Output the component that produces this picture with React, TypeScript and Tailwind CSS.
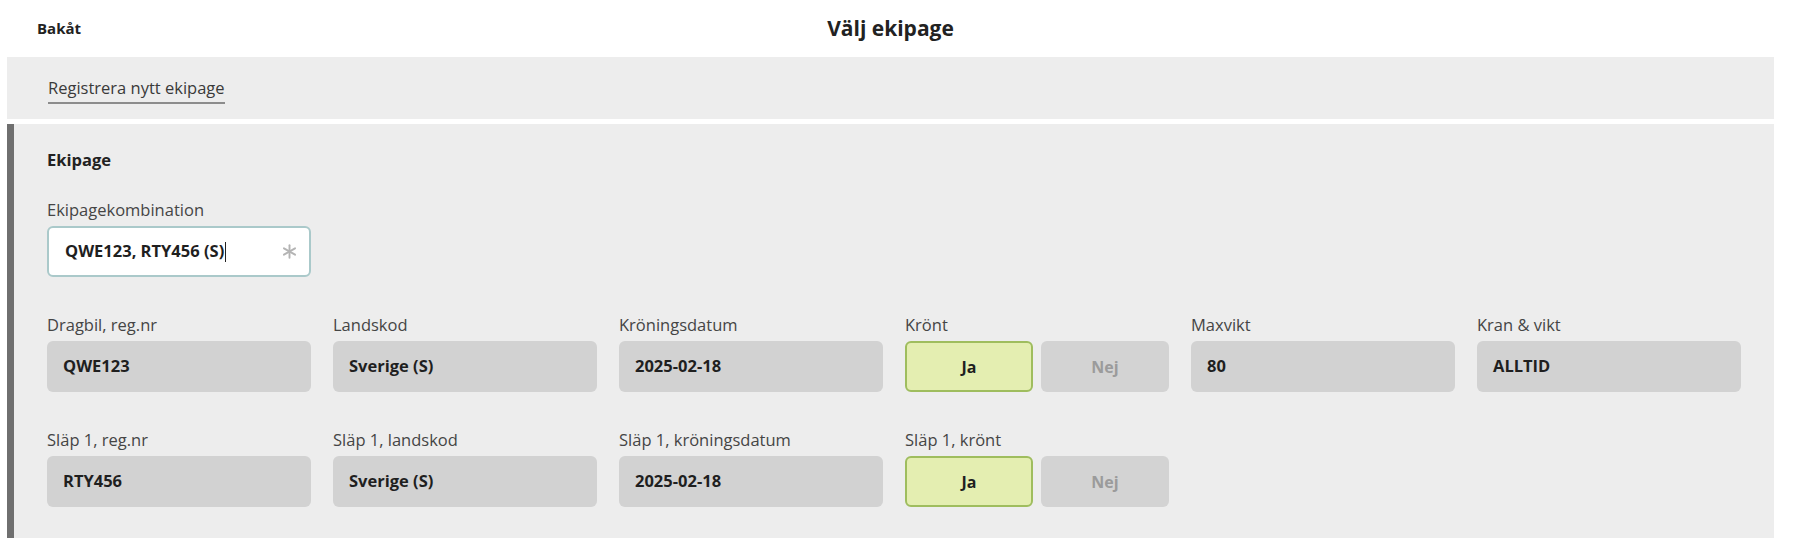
import React from 'react';

interface Field {
  label: string;
  value: string;
}

const row1: Field[] = [
  { label: 'Dragbil, reg.nr', value: 'QWE123' },
  { label: 'Landskod', value: 'Sverige (S)' },
  { label: 'Kröningsdatum', value: '2025-02-18' },
];

const row2: Field[] = [
  { label: 'Släp 1, reg.nr', value: 'RTY456' },
  { label: 'Släp 1, landskod', value: 'Sverige (S)' },
  { label: 'Släp 1, kröningsdatum', value: '2025-02-18' },
];

function Label({ children }: { children: React.ReactNode }) {
  return <div className="text-[16.5px] leading-[20px] text-[#454545] mb-[6px]">{children}</div>;
}

function ReadOnlyField({ label, value }: Field) {
  return (
    <div>
      <Label>{label}</Label>
      <div className="h-[51px] rounded-[6px] bg-[#d2d2d2] flex items-center px-[16px] text-[16.5px] font-bold text-[#1f1f1f]">
        {value}
      </div>
    </div>
  );
}

function YesNo({ label }: { label: string }) {
  return (
    <div>
      <Label>{label}</Label>
      <div className="flex gap-[8px]">
        <button className="h-[51px] w-[128px] rounded-[6px] bg-[#e4eeb1] border-2 border-[#9fbd5e] text-[16px] font-bold text-[#1f1f1f]">
          Ja
        </button>
        <button className="h-[51px] w-[128px] rounded-[6px] bg-[#d3d3d3] text-[16px] font-bold text-[#9b9b9b]">
          Nej
        </button>
      </div>
    </div>
  );
}

export default function App() {
  return (
    <div className="min-h-[560px] bg-white font-['Open_Sans',sans-serif] text-[#1f1f1f]">
      <div className="ml-[7px] w-[1767px]">
        {/* Header */}
        <div className="h-[57px] grid grid-cols-[1fr_auto_1fr] items-center">
          <a className="pl-[30px] text-[15px] font-bold text-[#222]">Bakåt</a>
          <h1 className="text-[21px] font-bold text-[#222]">Välj ekipage</h1>
          <div />
        </div>

        {/* Register bar */}
        <div className="h-[62px] bg-[#ededed] flex items-center pl-[41px]">
          <span className="mt-[6px] text-[16.5px] leading-[20px] text-[#3a3a3a] pb-[4px] border-b-2 border-[#8c8c8c]">
            Registrera nytt ekipage
          </span>
        </div>

        {/* Ekipage panel */}
        <div className="mt-[5px] bg-[#ededed] border-l-[7px] border-[#6f6f6f] pl-[33px] pt-[26px] pb-[31px]">
          <div className="text-[16.5px] leading-[20px] font-bold text-[#222]">Ekipage</div>

          <div className="mt-[30px]">
            <Label>Ekipagekombination</Label>
            <div className="w-[264px] h-[51px] rounded-[6px] bg-white border-2 border-[#aac9ca] flex items-center pl-[16px] pr-[10px]">
              <span className="text-[16.5px] font-bold text-[#1f1f1f]">QWE123, RTY456 (S)</span>
              <span className="ml-[1px] w-px h-[20px] bg-[#222]" />
              <svg className="ml-auto" width="19" height="19" viewBox="0 0 24 24" fill="none" stroke="#b4b4b4" strokeWidth="2.4" strokeLinecap="round">
                <path d="M12 4v16" />
                <path d="M19 8 5 16" />
                <path d="M5 8l14 8" />
              </svg>
            </div>
          </div>

          <div className="mt-[38px] grid grid-cols-[repeat(6,264px)] gap-x-[22px]">
            {row1.map((f) => (
              <ReadOnlyField key={f.label} {...f} />
            ))}
            <YesNo label="Krönt" />
            <ReadOnlyField label="Maxvikt" value="80" />
            <ReadOnlyField label="Kran & vikt" value="ALLTID" />
          </div>

          <div className="mt-[38px] grid grid-cols-[repeat(6,264px)] gap-x-[22px]">
            {row2.map((f) => (
              <ReadOnlyField key={f.label} {...f} />
            ))}
            <YesNo label="Släp 1, krönt" />
          </div>
        </div>
      </div>
    </div>
  );
}
